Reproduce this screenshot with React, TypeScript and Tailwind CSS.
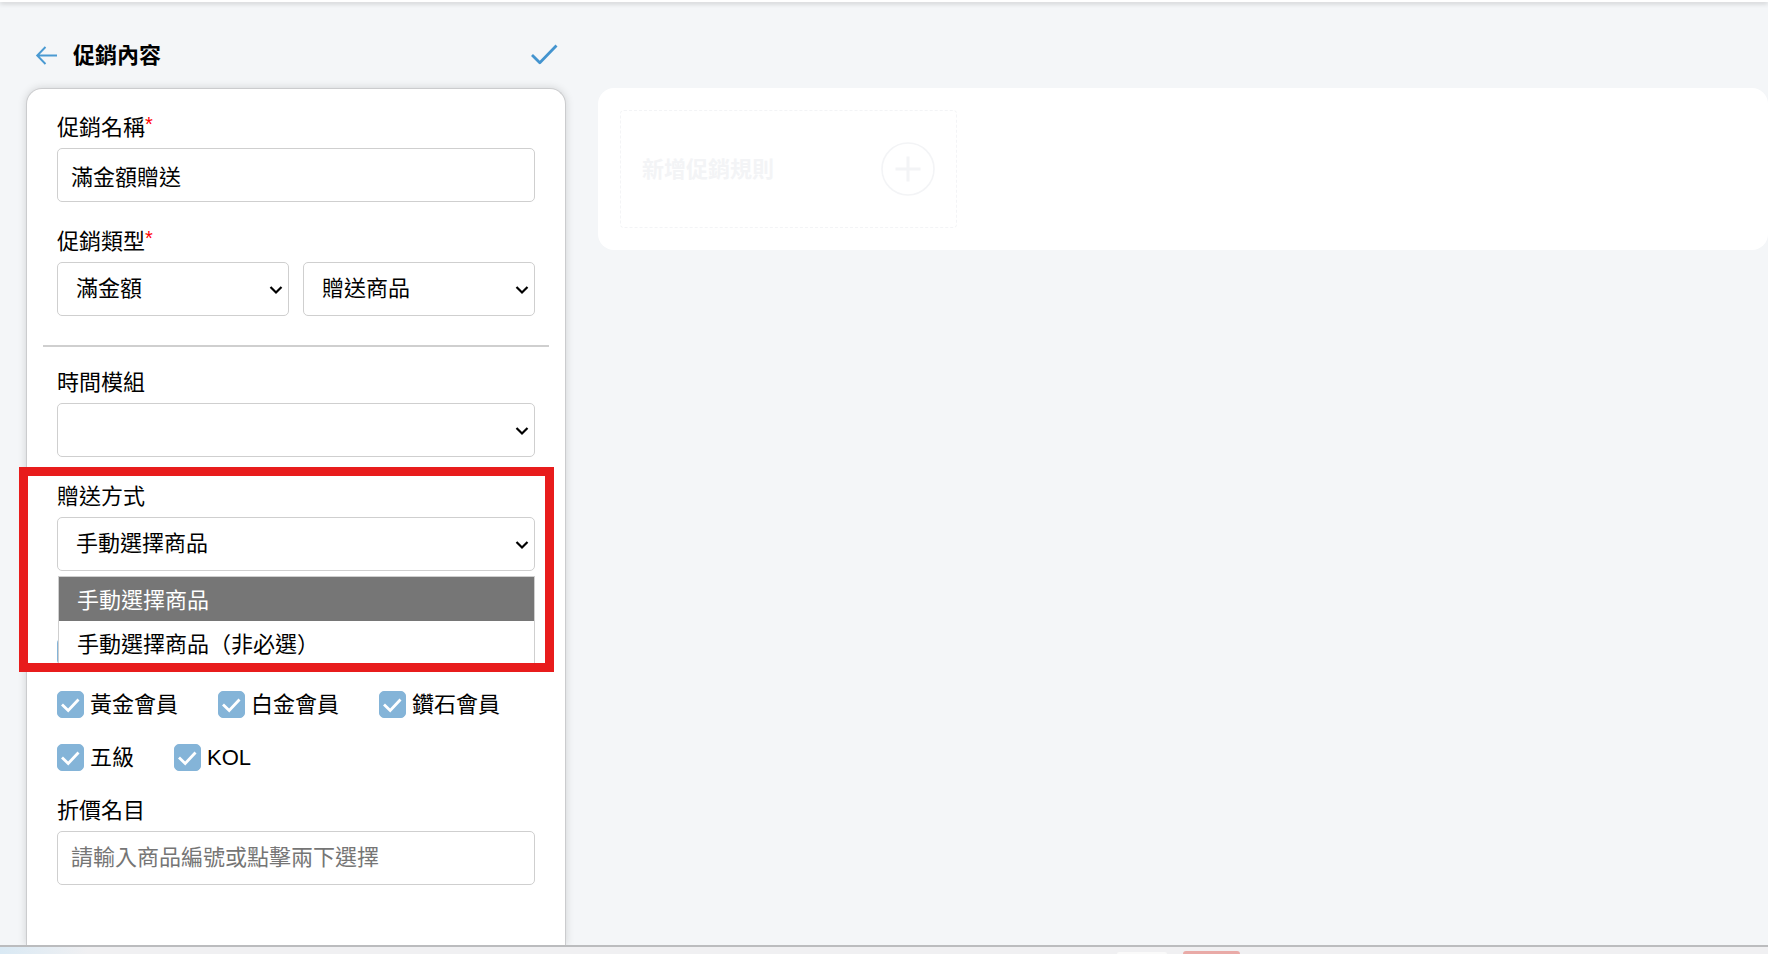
import { useState, type ReactNode } from "react";

const FONT = 'font-["Liberation_Sans","Noto_Sans_CJK_TC",sans-serif]';
const MEMBER_LEVELS = ["黃金會員", "白金會員", "鑽石會員", "五級", "KOL"];
const GIFT_MODES = ["手動選擇商品", "手動選擇商品（非必選）"];

function Label({ htmlFor, required, children }: { htmlFor: string; required?: boolean; children: ReactNode }) {
  return (
    <label htmlFor={htmlFor} className="flex mb-1 text-[22px] leading-8">
      {children}
      {required && <span className="text-[#ff0000] text-xl leading-6">*</span>}
    </label>
  );
}

function TextInput({ id, defaultValue, placeholder }: { id: string; defaultValue?: string; placeholder?: string }) {
  return (
    <input
      id={id}
      type="text"
      defaultValue={defaultValue}
      placeholder={placeholder}
      className="block w-full h-[54px] rounded-[5px] border border-[#cfcfcf] bg-white px-[13px] text-[22px] placeholder:text-[#757575] outline-none"
    />
  );
}

function Select({ id, label, options }: { id: string; label?: string; options: string[] }) {
  return (
    <div className="relative flex-1">
      <select
        id={id}
        aria-label={label}
        className="block w-full h-[54px] appearance-none rounded-[5px] border border-[#cfcfcf] bg-white pl-[18px] pr-8 pb-[2px] text-[22px] outline-none"
      >
        {options.map((o) => (
          <option key={o}>{o}</option>
        ))}
      </select>
      <svg
        className="absolute right-[6px] top-[23px] pointer-events-none"
        width="14" height="10" viewBox="0 0 14 10" fill="none"
      >
        <path d="M1.5 2L7 7.5L12.5 2" stroke="#000" strokeWidth="2.2" />
      </svg>
    </div>
  );
}

function CheckItem({ label }: { label: string }) {
  const [checked, setChecked] = useState(true);
  return (
    <label className="flex items-center gap-[6px] text-[22px] leading-[27px]">
      <span className="relative size-[27px]">
        <input
          type="checkbox"
          checked={checked}
          onChange={(e) => setChecked(e.target.checked)}
          className="block size-[27px] appearance-none rounded-[5px] border border-[#84b4d8] checked:bg-[#84b4d8]"
        />
        {checked && (
          <svg className="absolute inset-0 pointer-events-none" width="27" height="27" viewBox="0 0 27 27" fill="none">
            <path d="M5 13.5L11.2 19.5L21.5 8.5" stroke="#fff" strokeWidth="2.8" />
          </svg>
        )}
      </span>
      {label}
    </label>
  );
}

function PromotionForm() {
  return (
    <form className="flex-1 rounded-t-2xl border border-b-0 border-[#cbccce] bg-white px-[30px] pt-[23px] pb-[60px] shadow-[0_0_8px_rgba(0,0,0,0.15)]">
      <div className="mb-6">
        <Label htmlFor="name" required>促銷名稱</Label>
        <TextInput id="name" defaultValue="滿金額贈送" />
      </div>

      <div>
        <Label htmlFor="condition" required>促銷類型</Label>
        <div className="flex gap-[14px]">
          <Select id="condition" options={["滿金額"]} />
          <Select id="reward" label="贈送商品" options={["贈送商品"]} />
        </div>
      </div>

      <hr className="-mx-[14px] mt-[29px] mb-5 border-t-2 border-[#cfcfcf]" />

      <div className="mb-6">
        <Label htmlFor="time">時間模組</Label>
        <Select id="time" options={[""]} />
      </div>

      <div className="relative mb-[67px]">
        <Label htmlFor="gift">贈送方式</Label>
        <Select id="gift" options={GIFT_MODES} />

        {/* open option list */}
        <ul className="absolute z-10 left-px right-0 top-full mt-[5px] border border-[#cfcfcf] bg-white text-[22px] leading-10">
          {GIFT_MODES.map((mode, i) => (
            <li key={mode} className={i === 0 ? "pl-[18px] pt-1 bg-[#767676] text-white" : "pl-[18px] pt-1"}>
              {mode}
            </li>
          ))}
        </ul>

        {/* highlight frame */}
        <div className="absolute z-20 -left-[38px] -right-[19px] -top-[14px] -bottom-[101px] border-9 border-[#e81c1c] pointer-events-none" />
      </div>

      <div className="flex flex-wrap gap-x-10 gap-y-[26px] mb-6">
        <div className="w-full">
          <div className="size-[27px] rounded-[5px] bg-[#84b4d8]" />
        </div>
        {MEMBER_LEVELS.map((level) => (
          <CheckItem key={level} label={level} />
        ))}
      </div>

      <div>
        <Label htmlFor="item">折價名目</Label>
        <TextInput id="item" placeholder="請輸入商品編號或點擊兩下選擇" />
      </div>
    </form>
  );
}

function RulePanel() {
  return (
    <section className="flex-1 self-start mt-[86px] rounded-2xl bg-white p-[22px]">
      <button
        type="button"
        className="flex w-full max-w-[337px] h-[118px] items-center justify-between rounded-[4px] border border-dashed border-[#f3f4f6] px-[21px] text-[22px] font-bold text-[#f3f4f6]"
      >
        新增促銷規則
        <svg width="54" height="54" viewBox="0 0 54 54" fill="none" stroke="#f3f4f6">
          <circle cx="27" cy="27" r="26" strokeWidth="1.6" />
          <path d="M27 14.5V39.5M14.5 27H39.5" strokeWidth="3" />
        </svg>
      </button>
    </section>
  );
}

export default function App() {
  return (
    <div className={`flex min-h-screen flex-col bg-[#f4f6f8] text-black ${FONT}`}>
      <div className="h-[2px] bg-white shadow-[0_1px_5px_rgba(0,0,0,0.3)]" />

      <main className="flex flex-1 gap-8 pl-[26px]">
        <div className="flex w-full max-w-[540px] flex-col">
          <header className="flex items-center h-11 mt-[31px] mb-[11px] pl-[9px] pr-2">
            <button type="button" aria-label="返回">
              <svg width="24" height="20" viewBox="0 0 24 20" fill="none" stroke="#4a9ad2" strokeWidth="1.9">
                <path d="M22 10.5H2.4M10.5 2L2.2 10.5L10.5 19" />
              </svg>
            </button>
            <h1 className="ml-[14px] text-[22px] font-bold">促銷內容</h1>
            <button type="button" aria-label="儲存" className="ml-auto">
              <svg width="28" height="24" viewBox="0 0 28 24" fill="none" stroke="#4394cf" strokeWidth="2.8">
                <path d="M2 12L9.8 19.8L26.5 2.5" strokeLinejoin="round" />
              </svg>
            </button>
          </header>
          <PromotionForm />
        </div>
        <RulePanel />
      </main>

      {/* taskbar edge */}
      <footer className="relative flex h-[9px] items-end justify-start overflow-hidden border-t-2 border-[#bbbcbe] bg-linear-to-r from-[#d9e9f4] to-[#f0f0f2] to-5%">
        <div className="ml-[63.2%] w-[50px] h-[2px] rounded-t-[4px] bg-[#fafafa]" />
        <div className="ml-4 w-[57px] h-[3px] rounded-t-[4px] bg-[#e9aaa7]" />
      </footer>
    </div>
  );
}
